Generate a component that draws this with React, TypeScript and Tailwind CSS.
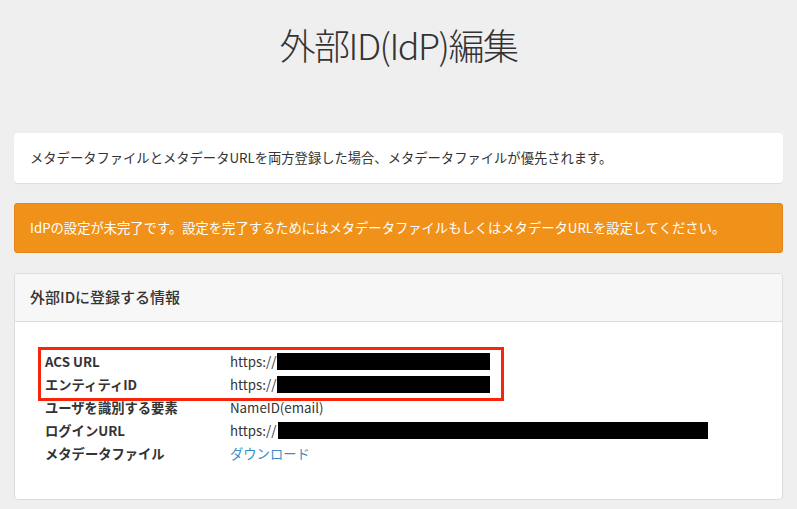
export default function App() {
  const rows: { label: string; value: React.ReactNode }[] = [
    {
      label: 'ACS URL',
      value: (
        <span className="flex items-center">
          https://
          <span className="ml-[1px] inline-block h-[17px] w-[213px] bg-black" />
        </span>
      ),
    },
    {
      label: 'エンティティID',
      value: (
        <span className="flex items-center">
          https://
          <span className="ml-[1px] inline-block h-[17px] w-[213px] bg-black" />
        </span>
      ),
    },
    { label: 'ユーザを識別する要素', value: 'NameID(email)' },
    {
      label: 'ログインURL',
      value: (
        <span className="flex items-center">
          https://
          <span className="ml-[2px] inline-block h-[17px] w-[430px] bg-black" />
        </span>
      ),
    },
    {
      label: 'メタデータファイル',
      value: <a className="text-[#3b8dc6]">ダウンロード</a>,
    },
  ];

  return (
    <div
      className="min-h-screen bg-[#efefef] px-[14px] text-[#333]"
      style={{ fontFamily: '"Noto Sans CJK JP", "Noto Sans", sans-serif' }}
    >
      {/* Page title */}
      <h1 className="pt-[20px] text-center text-[36px] leading-[48px] font-light tracking-[-1.5px]">
        外部ID(IdP)編集
      </h1>

      {/* Info card */}
      <div className="mt-[65px] rounded bg-white px-[16px] py-[16px] text-[13.3px] leading-[18px] shadow-[0_1px_1px_rgba(0,0,0,0.08)]">
        メタデータファイルとメタデータURLを両方登録した場合、メタデータファイルが優先されます。
      </div>

      {/* Warning alert */}
      <div className="mt-[20px] rounded-[3px] border border-[#e3871a] bg-[#f0921a] px-[15px] py-[15px] text-[13.3px] leading-[18px] text-white">
        IdPの設定が未完了です。設定を完了するためにはメタデータファイルもしくはメタデータURLを設定してください。
      </div>

      {/* Panel */}
      <div className="mt-[20px] rounded border border-[#dcdcdc] bg-white">
        <div className="flex h-[48px] items-center rounded-t border-b border-[#dcdcdc] bg-[#f7f7f7] px-[15px] text-[15px] font-medium">
          外部IDに登録する情報
        </div>
        <div className="relative px-[30px] pt-[28px] pb-[34px]">
          {/* Annotation box */}
          <div className="pointer-events-none absolute top-[25px] left-[23px] h-[54px] w-[466px] border-[3px] border-[#f5260c]" />
          <div className="grid grid-cols-[185px_1fr] text-[13.3px]">
            {rows.map((r) => (
              <div key={r.label} className="contents">
                <div className="flex h-[23px] items-center font-bold">{r.label}</div>
                <div className="flex h-[23px] items-center">{r.value}</div>
              </div>
            ))}
          </div>
        </div>
      </div>
    </div>
  );
}
